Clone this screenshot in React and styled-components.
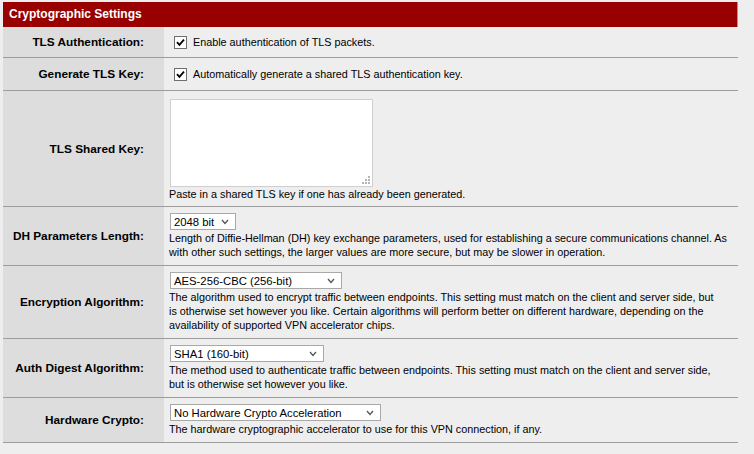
import React from "react";
import styled, { createGlobalStyle } from "styled-components";

const Global = createGlobalStyle`
  html, body { margin: 0; padding: 0; background: #eeeeee; }
  body { font-family: "Liberation Sans", Arial, sans-serif; color: #000; }
`;

const Page = styled.div`
  padding: 2px 0 0 3px;
  width: 735px;
`;

const Header = styled.div`
  height: 25px;
  line-height: 25px;
  background: #990000;
  color: #fff;
  font-weight: bold;
  font-size: 12px;
  padding-left: 6px;
  border-right: 1px solid #999;
`;

const Row = styled.div`
  display: grid;
  grid-template-columns: 161px 1fr;
  border-bottom: 1px solid #9c9c9c;
`;

const Label = styled.div`
  background: #dddddd;
  display: flex;
  align-items: center;
  justify-content: flex-end;
  padding-right: 20px;
  font-weight: bold;
  font-size: 11.8px;
`;

const Content = styled.div`
  background: #eeeeee;
  padding: ${(p) => p.$pad || "6px 3px 6px 5px"};
  font-size: 10.8px;
  line-height: 14px;
  display: flex;
  flex-direction: column;
  align-items: flex-start;
`;

const CheckLabel = styled.label`
  display: flex;
  align-items: center;
  gap: 6px;
  margin-left: 5px;
  height: 18px;
`;

const Box = styled.span`
  width: 11px;
  height: 11px;
  border: 1px solid #6f6f6f;
  background: #fff;
  display: inline-flex;
  align-items: center;
  justify-content: center;
  box-sizing: content-box;
`;

const Check = ({ children }) => (
  <CheckLabel>
    <Box>
      <svg width="9" height="9" viewBox="0 0 9 9">
        <path d="M1 4.2 L3.4 6.8 L8 1.6" fill="none" stroke="#000" strokeWidth="1.8" />
      </svg>
    </Box>
    {children}
  </CheckLabel>
);

const AreaWrap = styled.div`
  position: relative;
  margin: 2px 0 0 1px;
`;

const Area = styled.textarea`
  display: block;
  width: 203px;
  height: 88px;
  box-sizing: border-box;
  border: 1px solid #cfcfcf;
  background: #fff;
  resize: none;
  outline: none;
  margin: 0;
`;

const Grip = styled.svg`
  position: absolute;
  right: 3px;
  bottom: 3px;
`;

const SelectWrap = styled.div`
  position: relative;
  width: ${(p) => p.$w}px;
  margin: 0 0 1px 1px;
`;

const Select = styled.select`
  appearance: none;
  -webkit-appearance: none;
  display: block;
  width: 100%;
  height: 17px;
  box-sizing: border-box;
  border: 1px solid #a9a9a9;
  border-radius: 0;
  background: #fff;
  font-family: "Liberation Sans", Arial, sans-serif;
  font-size: 11.3px;
  color: #000;
  padding: 0 0 0 3px;
  margin: 0;
  outline: none;
`;

const Chevron = styled.svg`
  position: absolute;
  right: 7px;
  top: 6px;
  pointer-events: none;
`;

const Drop = ({ w, value }) => (
  <SelectWrap $w={w}>
    <Select defaultValue={value}>
      <option>{value}</option>
    </Select>
    <Chevron width="8" height="6" viewBox="0 0 8 6">
      <path d="M1 1 L4 4.5 L7 1" fill="none" stroke="#555" strokeWidth="1.3" />
    </Chevron>
  </SelectWrap>
);

const Help = styled.div``;

export default function App() {
  return (
    <>
      <Global />
      <Page>
        <Header>Cryptographic Settings</Header>
        <Row>
          <Label>TLS Authentication:</Label>
          <Content $pad="6px 3px 6px 5px">
            <Check>Enable authentication of TLS packets.</Check>
          </Content>
        </Row>
        <Row>
          <Label>Generate TLS Key:</Label>
          <Content $pad="7px 3px 7px 5px">
            <Check>Automatically generate a shared TLS authentication key.</Check>
          </Content>
        </Row>
        <Row>
          <Label>TLS Shared Key:</Label>
          <Content $pad="6px 3px 5px 5px">
            <AreaWrap>
              <Area />
              <Grip width="8" height="8" viewBox="0 0 8 8">
                <g fill="#b5b5b5">
                  <rect x="6" y="0" width="2" height="2" />
                  <rect x="3" y="3" width="2" height="2" />
                  <rect x="6" y="3" width="2" height="2" />
                  <rect x="0" y="6" width="2" height="2" />
                  <rect x="3" y="6" width="2" height="2" />
                  <rect x="6" y="6" width="2" height="2" />
                </g>
              </Grip>
            </AreaWrap>
            <Help>Paste in a shared TLS key if one has already been generated.</Help>
          </Content>
        </Row>
        <Row>
          <Label>DH Parameters Length:</Label>
          <Content>
            <Drop w={66} value="2048 bit" />
            <Help>
              Length of Diffie-Hellman (DH) key exchange parameters, used for establishing a secure
              communications channel. As
              <br />
              with other such settings, the larger values are more secure, but may be slower in
              operation.
            </Help>
          </Content>
        </Row>
        <Row>
          <Label>Encryption Algorithm:</Label>
          <Content>
            <Drop w={172} value="AES-256-CBC (256-bit)" />
            <Help>
              The algorithm used to encrypt traffic between endpoints. This setting must match on the
              client and server side, but
              <br />
              is otherwise set however you like. Certain algorithms will perform better on different
              hardware, depending on the
              <br />
              availability of supported VPN accelerator chips.
            </Help>
          </Content>
        </Row>
        <Row>
          <Label>Auth Digest Algorithm:</Label>
          <Content>
            <Drop w={154} value="SHA1 (160-bit)" />
            <Help>
              The method used to authenticate traffic between endpoints. This setting must match on
              the client and server side,
              <br />
              but is otherwise set however you like.
            </Help>
          </Content>
        </Row>
        <Row>
          <Label>Hardware Crypto:</Label>
          <Content>
            <Drop w={211} value="No Hardware Crypto Acceleration" />
            <Help>The hardware cryptographic accelerator to use for this VPN connection, if any.</Help>
          </Content>
        </Row>
      </Page>
    </>
  );
}
